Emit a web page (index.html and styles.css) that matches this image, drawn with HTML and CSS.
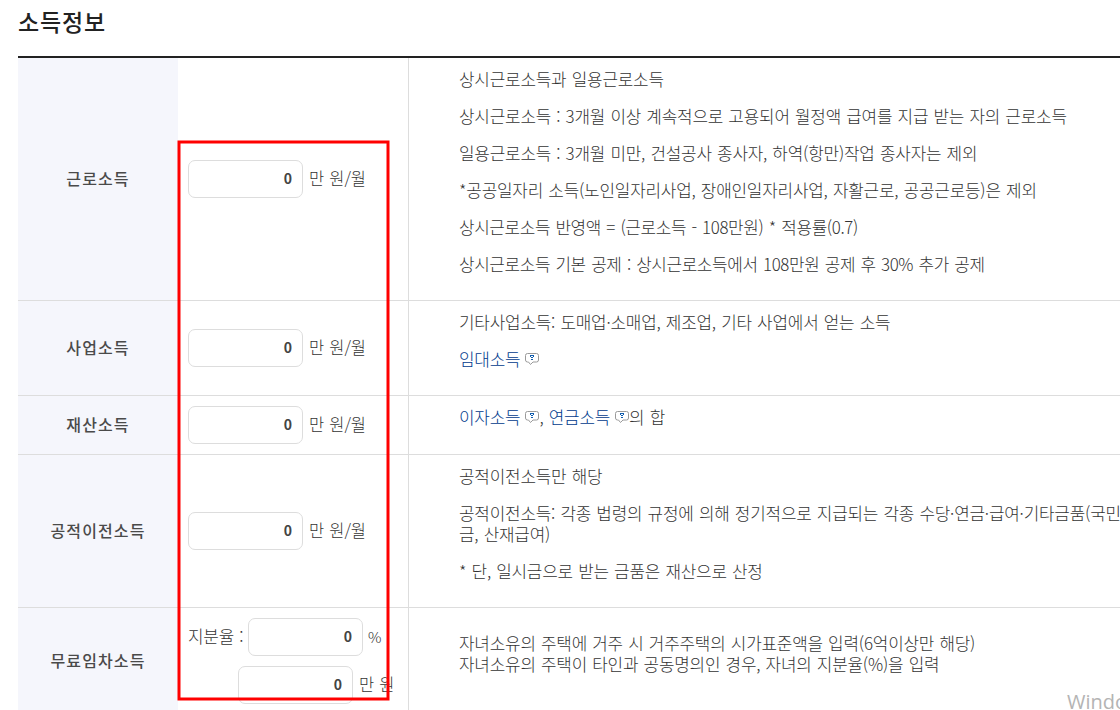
FILE: index.html
```html
<!DOCTYPE html>
<html lang="ko">
<head>
    <meta charset="UTF-8">
    <title>소득정보</title>
    <link rel="stylesheet" href="styles.css">
</head>
<body>
    <svg class="sprite">
        <symbol id="tip" viewBox="0 0 14 12">
            <path d="M2.500 .5h9q2 0 2 2v4.500q0 2-2 2h-3.500l-2.500 2.500-2-2.500h-1q-2 0-2-2v-4.500q0-2 2-2z" fill="#fff" stroke="#9a9a9a"/>
            <path d="M5 2h4v1h-4zM5 3h1v1h-1zM8 3h1v1h-1zM6 4h2v1h-2zM6 6h2v1h-2z" fill="#0f5cae"/>
        </symbol>
    </svg>

    <h2>소득정보</h2>
    <table>
        <tr>
            <th>근로소득</th>
            <td class="field"><input type="text" value="0"><span class="unit">만 원/월</span></td>
            <td class="desc">
                <p>상시근로소득과 일용근로소득</p>
                <p>상시근로소득 : 3개월 이상 계속적으로 고용되어 월정액 급여를 지급 받는 자의 근로소득</p>
                <p>일용근로소득 : 3개월 미만, 건설공사 종사자, 하역(항만)작업 종사자는 제외</p>
                <p>*공공일자리 소득(노인일자리사업, 장애인일자리사업, 자활근로, 공공근로등)은 제외</p>
                <p class="tight">상시근로소득 반영액 = (근로소득 - 108만원) * 적용률(0.7)</p>
                <p class="tight">상시근로소득 기본 공제 : 상시근로소득에서 108만원 공제 후 30% 추가 공제</p>
            </td>
        </tr>
        <tr>
            <th>사업소득</th>
            <td class="field"><input type="text" value="0"><span class="unit">만 원/월</span></td>
            <td class="desc">
                <p>기타사업소득: 도매업·소매업, 제조업, 기타 사업에서 얻는 소득</p>
                <p><a>임대소득<svg class="tip"><use href="#tip"/></svg></a></p>
            </td>
        </tr>
        <tr>
            <th>재산소득</th>
            <td class="field"><input type="text" value="0"><span class="unit">만 원/월</span></td>
            <td class="desc single">
                <p><a>이자소득<svg class="tip"><use href="#tip"/></svg></a>, <a>연금소득<svg class="tip"><use href="#tip"/></svg></a>의 합</p>
            </td>
        </tr>
        <tr>
            <th>공적이전소득</th>
            <td class="field"><input type="text" value="0"><span class="unit">만 원/월</span></td>
            <td class="desc">
                <p>공적이전소득만 해당</p>
                <p>공적이전소득: 각종 법령의 규정에 의해 정기적으로 지급되는 각종 수당·연금·급여·기타금품(국민<br>금, 산재급여)</p>
                <p>* 단, 일시금으로 받는 금품은 재산으로 산정</p>
            </td>
        </tr>
        <tr>
            <th>무료임차소득</th>
            <td class="field">
                <div class="line"><span class="share">지분율 :</span><input type="text" value="0"><span class="unit percent">%</span></div>
                <div class="line amount"><input type="text" value="0"><span class="unit">만 원</span></div>
            </td>
            <td class="desc">
                <p>자녀소유의 주택에 거주 시 거주주택의 시가표준액을 입력(6억이상만 해당)<br>자녀소유의 주택이 타인과 공동명의인 경우, 자녀의 지분율(%)을 입력</p>
            </td>
        </tr>
    </table>

    <svg class="marker"><rect x="2" y="2" width="209" height="557"/></svg>
    <div class="watermark">Windo</div>
</body>
</html>
```
FILE: styles.css
```css
body {
    margin: 0;
    width: 1120px;
    height: 710px;
    overflow: hidden;
    position: relative;
    background: #fff;
    color: #333;
    font: 300 16.9px/21px "Noto Sans CJK KR", sans-serif;
    letter-spacing: -0.19px;
    word-spacing: 0.7px;
}
.sprite {
    display: none;
}
h2 {
    margin: 0;
    height: 56px;
    padding-left: 18px;
    font-size: 23px;
    font-weight: 500;
    line-height: 42px;
    letter-spacing: 0.8px;
    color: #222;
    box-sizing: border-box;
}
table {
    width: 1102px;
    margin-left: 18px;
    border-top: 2px solid #222;
    border-spacing: 0;
    table-layout: fixed;
}
th, td {
    padding: 10px 0;
    border-bottom: 1px solid #ddd;
    vertical-align: middle;
}
th {
    width: 160px;
    padding: 9px 0 11px;
    background: #f5f6fc;
    font-size: 16px;
    font-weight: 500;
    letter-spacing: 1.1px;
    color: #4a4a4a;
}
.field {
    width: 220px;
    padding-left: 10px;
    border-right: 1px solid #ddd;
    white-space: nowrap;
}
.desc {
    padding-left: 50px;
    white-space: nowrap;
    overflow: hidden;
}
.single {
    padding-top: 9px;
    padding-bottom: 11px;
}
.tight {
    letter-spacing: -0.36px;
    word-spacing: 1px;
}
.desc p {
    margin: 0 0 16px;
}
input {
    width: 115px;
    height: 38px;
    padding: 0 10px 2px;
    border: 1px solid #ddd;
    border-radius: 7px;
    box-sizing: border-box;
    text-align: right;
    vertical-align: middle;
    font: 700 14px "Noto Sans CJK KR", sans-serif;
    color: #444;
    background: #fff;
}
.unit {
    display: inline-block;
    margin-left: 6px;
    padding-bottom: 2px;
    font-size: 16.5px;
    letter-spacing: -0.1px;
    vertical-align: middle;
}
.percent {
    margin-left: 5px;
    font-size: 15px;
}
.line {
    display: flex;
    align-items: center;
}
.share {
    width: 60px;
    padding-bottom: 3px;
}
.amount {
    margin-top: 10px;
    padding-left: 50px;
}
a {
    color: #003a8c;
}
.tip {
    width: 14px;
    height: 12px;
    margin-left: 5px;
    vertical-align: 1px;
}

/* red highlight over the input column */
.marker {
    position: absolute;
    left: 177px;
    top: 140px;
    width: 214px;
    height: 562px;
}
.marker rect {
    fill: none;
    stroke: #f00;
    stroke-width: 3;
}
.watermark {
    position: absolute;
    left: 1067px;
    top: 688px;
    font: 20px/28px "Open Sans", sans-serif;
    letter-spacing: 0;
    color: #b4b4b4;
}
```
